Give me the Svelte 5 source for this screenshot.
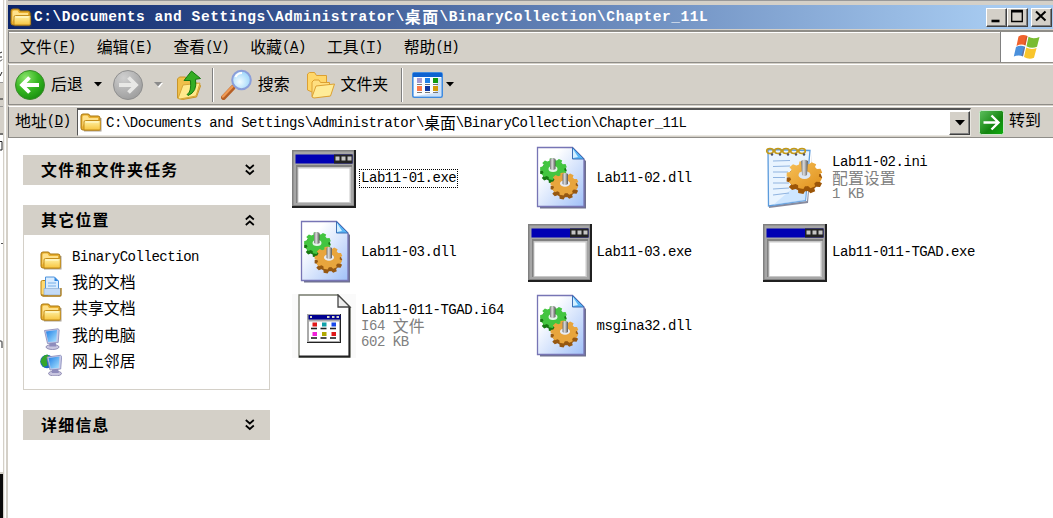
<script>
  const path = 'C:\\Documents and Settings\\Administrator\\桌面\\BinaryCollection\\Chapter_11L';

  const menus = [
    { name: '文件', key: 'F' },
    { name: '编辑', key: 'E' },
    { name: '查看', key: 'V' },
    { name: '收藏', key: 'A' },
    { name: '工具', key: 'T' },
    { name: '帮助', key: 'H' },
  ];

  const places = [
    { label: 'BinaryCollection', icon: 'folder' },
    { label: '我的文档', icon: 'docs' },
    { label: '共享文档', icon: 'folder' },
    { label: '我的电脑', icon: 'computer' },
    { label: '网上邻居', icon: 'network' },
  ];

  const files = [
    { name: 'Lab11-01.exe', icon: 'exe', selected: true },
    { name: 'Lab11-02.dll', icon: 'dll' },
    { name: 'Lab11-02.ini', icon: 'ini', details: ['配置设置', '1 KB'] },
    { name: 'Lab11-03.dll', icon: 'dll' },
    { name: 'Lab11-03.exe', icon: 'exe' },
    { name: 'Lab11-011-TGAD.exe', icon: 'exe' },
    { name: 'Lab11-011-TGAD.i64', icon: 'i64', details: ['I64 文件', '602 KB'] },
    { name: 'msgina32.dll', icon: 'dll' },
  ];

  // Splits a label into half-width and full-width runs.
  function runs(s) {
    return s.match(/[\u3000-\u9fff]+|[^\u3000-\u9fff]+/g).map((t) => ({
      t,
      wide: /[\u3000-\u9fff]/.test(t),
    }));
  }

  function gear(cx, cy, rx, ry, teeth = 9, depth = 0.19) {
    const pts = [];
    for (let i = 0; i < teeth; i++) {
      for (const [f, r] of [[0, 1 - depth], [0.2, 1 - depth], [0.34, 1], [0.76, 1], [0.9, 1 - depth]]) {
        const a = ((i + f) / teeth) * Math.PI * 2;
        pts.push(`${(cx + Math.cos(a) * rx * r).toFixed(1)},${(cy + Math.sin(a) * ry * r).toFixed(1)}`);
      }
    }
    return pts.join(' ');
  }
</script>

{#snippet txt(s)}{#each runs(s) as r}<span class={r.wide ? 'cj' : 'la'}>{r.t}</span>{/each}{/snippet}

{#snippet folder(w, h)}
  <svg width={w} height={h} viewBox="0 0 22 19">
    <path d="M3 5h18.500v13.500H4z" fill="#5b4a2a" opacity=".5" />
    <path d="M1 15V3q0-2 2-2h5q1.500 0 2 2h8q2 0 2 2v11q0 1-1 1H3q-2 0-2-2z" fill="#e9b030" stroke="#a8760f" />
    <path d="M2.500 14V4q0-1.500 1.500-1.500h3.500L9 5h9v3H5z" fill="#ffe18a" />
    <path d="M5.500 7.500h14q.8 0 .8 1V16q0 1-1 1H5q-1 0-1-1V9q0-1.500 1.500-1.500z" fill="url(#gold)" stroke="#c58f1c" />
    <path d="M5.500 9h13" stroke="#fffbd8" />
  </svg>
{/snippet}

{#snippet monitor()}
  <ellipse cx="12.500" cy="19" rx="6.500" ry="2.500" fill="#c9c6e0" stroke="#7f7ba6" stroke-width=".8" />
  <path d="M9.500 13h6l.8 5.500h-7z" fill="#8f8cbc" />
  <path d="M4.500 2.500L18 .8l1.200 1-1 12.700L7.500 15.500z" fill="#c8cbe8" stroke="#8688b8" stroke-width=".8" />
  <path d="M6 3.500l11-1.500-.8 11.500-8 .5z" fill="url(#screen)" />
{/snippet}

{#snippet chevron(up)}
  <svg class="chev" class:up width="10" height="12" viewBox="0 0 10 12">
    <path d="M.8 1l4 3.500L8.800 1M.8 6.500l4 3.500 4-3.500" fill="none" stroke="#000" stroke-width="1.700" />
  </svg>
{/snippet}

<svg class="defs" width="0" height="0">
  <defs>
    <linearGradient id="gold" x2="0" y2="1"><stop stop-color="#fff3a8" /><stop offset="1" stop-color="#f7c540" /></linearGradient>
    <linearGradient id="screen" x2="1" y2="1"><stop stop-color="#1f7fe6" /><stop offset="1" stop-color="#a9e2ff" /></linearGradient>
    <linearGradient id="page" x2="1" y2="1"><stop offset=".25" stop-color="#fff" /><stop offset="1" stop-color="#a0c0f8" /></linearGradient>
    <linearGradient id="pin" x2="1" y2="0"><stop stop-color="#777" /><stop offset=".4" stop-color="#ddd" /><stop offset="1" stop-color="#555" /></linearGradient>
    <linearGradient id="go" x2="1" y2="1"><stop stop-color="#5fc05f" /><stop offset=".6" stop-color="#13850f" /><stop offset="1" stop-color="#0fae0f" /></linearGradient>
    <linearGradient id="amber" x2="1" y2="1"><stop stop-color="#f7c25a" /><stop offset="1" stop-color="#e0901c" /></linearGradient>
    <radialGradient id="green" cx=".35" cy=".25" r=".85"><stop stop-color="#8be36c" /><stop offset=".5" stop-color="#37b722" /><stop offset="1" stop-color="#138a0c" /></radialGradient>
    <radialGradient id="grey" cx=".35" cy=".25" r=".85"><stop stop-color="#cfcfcf" /><stop offset="1" stop-color="#9a9a9a" /></radialGradient>
    <radialGradient id="lens" cx=".4" cy=".6" r=".7"><stop stop-color="#f2fcff" /><stop offset="1" stop-color="#8fd0fa" /></radialGradient>
  </defs>
</svg>

<div class="desk">
  <svg class="behind" width="3" height="518" viewBox="0 0 3 518">
    <path d="M0 0h3v518H0z" fill="#fff" />
    <path d="M0 82h3v53H0z" fill="#d4d0c8" />
    <path d="M0 82.500h3M0 106.500h3" stroke="#999" />
    <path d="M0 99h3M0 134h3" stroke="#555" stroke-width="1.500" />
    <path d="M0 53l2-1M0 57h2M0 61.500l2-2M0 76l2-4" stroke="#222" fill="none" />
    <path d="M0 141.500h2v8.500H0" stroke="#222" fill="none" />
    <path d="M0 341h1.500q.5 0 .5 2v5" stroke="#222" fill="none" />
    <path d="M1 243.500h2" stroke="#555" />
    <path d="M0 472h3v2H0z" fill="#d4d0c8" />
    <path d="M0 474h3v44H0z" fill="#0a0a0a" />
  </svg>
  <div class="frame"></div>

  <div class="window">
    <header class="title">
      {@render folder(22, 19)}
      <h1>{@render txt(path)}</h1>
      <div class="controls">
        <button aria-label="min"><svg width="14" height="14"><path d="M2.500 12h8" stroke="#000" stroke-width="2.600" /></svg></button>
        <button aria-label="max"><svg width="14" height="14"><path d="M1.700 1.500h10.600v11H1.700zM1 2.800h12" fill="none" stroke="#000" stroke-width="1.300" /></svg></button>
        <button class="close" aria-label="close"><svg width="14" height="14"><path d="M2 2.500l9.500 9M11.500 2.500l-9.500 9" stroke="#000" stroke-width="2" /></svg></button>
      </div>
    </header>

    <div class="menubar">
      <nav>
        {#each menus as m}
          <span class="menu"><span class="cj">{m.name}</span><span class="la">(<u>{m.key}</u>)</span></span>
        {/each}
      </nav>
      <div class="flag">
        <svg width="28" height="26" viewBox="0 0 28 26">
          <path d="M5.500 2.500Q9.500 0 14.500 2L12.500 11.500Q8 9.500 3.500 12z" fill="#f0622c" />
          <path d="M15.500 2.800Q20 5.500 26.500 3L24 12.800Q18.500 15 13.500 12.200z" fill="#79bc32" />
          <path d="M3 13Q7.500 10.800 12.200 12.800L10 22.500Q6 20.500.8 22.500z" fill="#4a90dc" />
          <path d="M13.200 13.500Q18 16 23.600 14L21 23.800Q16 26 11 23z" fill="#f9c52c" />
          <path d="M13 3l1.500-1-2 9.500-1.500-.5zM11 13l1 .3-2 9-1.500-.5z" fill="#9c3a28" opacity=".35" />
        </svg>
      </div>
    </div>

    <div class="toolbar">
      <svg class="back" width="32" height="32" viewBox="0 0 32 32">
        <circle cx="16" cy="16" r="14.500" fill="url(#green)" stroke="#3c8a2c" />
        <path d="M25 16H9M15.500 8.500L8 16l7.500 7.500" fill="none" stroke="#fff" stroke-width="3.800" />
      </svg>
      <span class="lbl back-l">{@render txt('后退')}</span>
      <svg class="tri t1" width="8" height="5"><path d="M0 0h8L4 4.500z" fill="#000" /></svg>
      <svg class="fwd" width="32" height="32" viewBox="0 0 32 32">
        <circle cx="16" cy="16" r="14.500" fill="url(#grey)" stroke="#8f8f8f" />
        <path d="M7 16h16M16.500 8.500L24 16l-7.500 7.500" fill="none" stroke="#e8e8e6" stroke-width="3.800" />
      </svg>
      <svg class="tri t2" width="9" height="6"><path d="M1 1h8L5 6z" fill="#fff" /><path d="M0 0h8L4 4.500z" fill="#8a8a8a" /></svg>
      <svg class="upf" width="26" height="30" viewBox="0 0 26 30">
        <path d="M1.500 28V9l2-2h6l2 3 12 4 1 2-4 11-14 2.500z" fill="#f0c04a" stroke="#c8952a" />
        <path d="M2 28.500L7 15l17-2-4 13-16 3z" fill="#ffe98c" stroke="#d6a638" />
        <path d="M11 24.500q4.500-2 3.500-14H8L15.500 1 24.500 8.500l-5 .8Q21.500 22 12 25.500z" fill="#35ad24" stroke="#15780f" />
      </svg>
      <i class="sep s1"></i>
      <svg class="search" width="32" height="31" viewBox="0 0 32 31">
        <path d="M2.500 28.500L12 18.500" stroke="#b65f25" stroke-width="5" stroke-linecap="round" />
        <path d="M2 27.500L11.500 17.500" stroke="#ef9a55" stroke-width="2.500" stroke-linecap="round" />
        <circle cx="20.500" cy="11" r="9.300" fill="url(#lens)" stroke="#8b9fda" stroke-width="2" />
        <path d="M14.500 8q2-4 6.500-4" fill="none" stroke="#fff" stroke-width="2" />
      </svg>
      <span class="lbl search-l">{@render txt('搜索')}</span>
      <svg class="folders" width="30" height="28" viewBox="0 0 30 28">
        <path d="M1.500 19V3l2-1.500h5l2 3h10V12L6 21z" fill="#ffd76a" stroke="#dca032" />
        <path d="M6 25.500V11l2-2h5l1.500 2.500h9V25z" fill="#ffdf80" stroke="#dca032" />
        <path d="M6 26l4-11 18.500-2-4 12L8 27z" fill="#ffec98" stroke="#dca032" />
      </svg>
      <span class="lbl folders-l">{@render txt('文件夹')}</span>
      <i class="sep s2"></i>
      <svg class="views" width="31" height="26" viewBox="0 0 31 26">
        <rect x=".8" y=".8" width="29.400" height="24.400" rx="1.500" fill="#f8fbff" stroke="#3f8be0" stroke-width="1.600" />
        <path d="M1 1h29v4H1z" fill="#0d62d0" />
        <path d="M26 6h3v18H3l20-3z" fill="#cde1fa" />
        {#each ['#a59ad2', '#1d80e8', '#109a10', '#ff7848', '#0c35a0', '#d49b08'] as c, i}
          <rect x={5 + (i % 3) * 8} y={6 + Math.floor(i / 3) * 8} width="5" height="5" fill={c} />
          <path d={`M${5 + (i % 3) * 8} ${12.500 + Math.floor(i / 3) * 8}h5`} stroke="#777" />
        {/each}
      </svg>
      <svg class="tri t3" width="8" height="5"><path d="M0 0h8L4 4.500z" fill="#000" /></svg>
    </div>

    <div class="address">
      <span class="addr-l"><span class="cj">地址</span><span class="la">(<u>D</u>)</span></span>
      <div class="field">
        {@render folder(22, 19)}
        <span class="value">{@render txt(path)}</span>
        <button aria-label="open"><svg width="10" height="6"><path d="M0 0h10L5 5.500z" fill="#000" /></svg></button>
      </div>
      <svg class="goicon" width="25" height="25" viewBox="0 0 25 25">
        <rect x=".5" y=".5" width="24" height="24" rx="2" fill="url(#go)" stroke="#cfe8cf" />
        <path d="M4.500 12.500h14M12.500 5.500l7 7-7 7" fill="none" stroke="#fff" stroke-width="2.400" />
      </svg>
      <span class="go-l">{@render txt('转到')}</span>
    </div>

    <main>
      <aside>
        <section>
          <h2>{@render txt('文件和文件夹任务')}{@render chevron(false)}</h2>
        </section>
        <section>
          <h2>{@render txt('其它位置')}{@render chevron(true)}</h2>
          <ul>
            {#each places as p}
              <li>
                {#if p.icon === 'folder'}
                  {@render folder(22, 19)}
                {:else if p.icon === 'docs'}
                  <svg width="22" height="21" viewBox="0 0 22 21">
                    <path d="M1 18V6q0-1.500 1.500-1.500H8V19H3q-2 0-2-1z" fill="#ffd970" stroke="#b98514" />
                    <path d="M5.500 1h9l4 4v11h-13z" fill="#d9ecff" stroke="#4f93dc" />
                    <path d="M14.500 1v4h4z" fill="#2f86e0" />
                    <path d="M8 7h8M8 10h8" stroke="#75aee8" />
                    <path d="M4 12.500h16.500V18q0 1-1 1H4z" fill="#c3daf5" stroke="#8faed0" stroke-width=".7" />
                    <path d="M1 18.500q1 1.500 2 1.500h17q1 0 1-1v-7" fill="none" stroke="#a8760f" stroke-width="1.300" />
                  </svg>
                {:else if p.icon === 'computer'}
                  <svg width="22" height="22" viewBox="0 0 22 22">{@render monitor()}</svg>
                {:else}
                  <svg width="22" height="22" viewBox="0 0 22 22">
                    <circle cx="7" cy="7.500" r="6.800" fill="#1f68c8" />
                    <path d="M.5 8q1-6.500 7-7.500l2 3-3 2 1 6-4 1.500z" fill="#35a52c" />
                    <g transform="translate(2.500 .5)">{@render monitor()}</g>
                  </svg>
                {/if}
                <span>{@render txt(p.label)}</span>
              </li>
            {/each}
          </ul>
        </section>
        <section>
          <h2>{@render txt('详细信息')}{@render chevron(false)}</h2>
        </section>
      </aside>

      <div class="files">
        {#each files as f}
          <div class="file">
            {#if f.icon === 'exe'}
              <svg class="exe" width="64" height="58" viewBox="0 0 64 58">
                <path d="M0 0h64v58H0z" fill="#202020" />
                <path d="M0 0h62v56H0z" fill="#808080" />
                <path d="M1.500 1.500h60V55h-60z" fill="#a6a6a6" />
                <path d="M3.500 4.500h57v9h-57z" fill="#0000b4" />
                <path d="M42 4.500h18.500v9H42z" fill="#222" />
                <path d="M43.500 6.500h4v4h-4zM49.500 6.500h4v4h-4zM55.500 6.500h4v4h-4z" fill="#c4c4c4" />
                <path d="M4 15h56v38H4z" fill="#808080" />
                <path d="M5.500 17h54v36h-54z" fill="#c8c8c8" />
                <path d="M6.500 18.500h51V52h-51z" fill="#fff" />
              </svg>
            {:else if f.icon === 'dll'}
              <svg class="tall" width="64" height="64" viewBox="0 0 64 64">
                <path d="M11 3.500h35L58 15v47.500H12z" fill="#3d4068" opacity=".75" />
                <path d="M9.500 1.500h35L56 13v47.500H9.500z" fill="url(#page)" stroke="#7775b5" stroke-width="1.300" />
                <path d="M44.500 1.500L56 13H44.500z" fill="#57b4f5" stroke="#3c6fb4" />
                <path d="M45 3l5 8-5 1z" fill="#d4f0ff" />
                <polygon points={gear(25.500, 26.500, 13.500, 11)} fill="#167812" />
                <polygon points={gear(25.500, 23, 13.500, 11)} fill="#43c540" />
                <ellipse cx="25" cy="23" rx="4.500" ry="3" fill="#e4f5e8" />
                <path d="M22 13q2.700-2 5.500 0v10q-2.800 2-5.500 0z" fill="url(#pin)" />
                <polygon points={gear(36.500, 42, 14, 11.500)} fill="#965812" />
                <polygon points={gear(36.500, 38, 14, 11.500)} fill="#e8a53d" />
                <ellipse cx="37" cy="37.500" rx="5" ry="3.300" fill="#e8ecf5" />
                <path d="M34.500 28q2.700-2 5.500 0v10q-2.800 2-5.500 0z" fill="url(#pin)" />
              </svg>
            {:else if f.icon === 'ini'}
              <svg class="tall" width="64" height="64" viewBox="0 0 64 64">
                <path d="M6 62l39-5 4-50-5 48-38 5z" fill="#555a75" opacity=".7" />
                <path d="M5 3.500l42 1-4.500 50L5.500 60z" fill="#e9f4ff" stroke="#5c9bdc" stroke-width="1.300" />
                <path d="M44 30l-1.500 24.500L10 59z" fill="#bcdcff" opacity=".6" />
                <path d="M10 15l17-.5M10 20.500l17-.5M10 26h15M10 31.500h12M10 37h16M10 43l16-1M10 49l16-2" stroke="#91b4e0" stroke-width="1.200" />
                {#each [4.500, 12.500, 20.500, 28.500, 36.500] as x}
                  <ellipse cx={x + 2.500} cy="5" rx="3.300" ry="2.500" fill="none" stroke="#c49918" stroke-width="1.600" />
                  <circle cx={x + 4.500} cy="8.500" r="1.200" fill="#4a5068" />
                {/each}
                <polygon points={gear(41.500, 34, 18, 14)} fill="#9c5608" />
                <polygon points={gear(41.500, 29, 18, 14)} fill="url(#amber)" />
                <ellipse cx="41.500" cy="29" rx="6" ry="4" fill="#dde8f5" />
                <path d="M38 15q3.500-2.500 7 0l-1 14q-2.500 2-5 0z" fill="url(#pin)" />
              </svg>
            {:else}
              <svg class="tall" width="64" height="64" viewBox="0 0 64 64">
                <path d="M0 0h64v64H0z" fill="#fafafa" />
                <path d="M7 1h39l12 12v50H7z" fill="#fff" stroke="#777b6e" stroke-width="1.300" />
                <path d="M57.300 13v49.500H7" fill="none" stroke="#222" stroke-width="1.800" />
                <path d="M46 1v12h12z" fill="#eee" stroke="#444" stroke-width="1.300" />
                <path d="M15 20h34v29H15z" fill="#222" />
                <path d="M15 20h33v28H15z" fill="#aaa" />
                <path d="M16.500 21h32v4.500h-32z" fill="#000090" />
                <path d="M35 22h2.500v2H35zM40 22h2.500v2H40zM44.500 22H47v2h-2.500zM18 22h2v2h-2z" fill="#d8d8c8" />
                <path d="M17 27.500h30V47H17z" fill="#fff" />
                {#each ['#e01818', '#10a0a8', '#1848e8', '#f020d8', '#b0a800', '#e01818'] as c, i}
                  <rect x={20.500 + (i % 3) * 9.500} y={28.500 + Math.floor(i / 3) * 9.500} width="4.500" height="4" fill={c} />
                  <path d={`M${19 + (i % 3) * 9.500} ${34.500 + Math.floor(i / 3) * 9.500}h6`} stroke="#222" stroke-width="1.600" />
                {/each}
              </svg>
            {/if}
            <div class="info">
              <span class="name" class:selected={f.selected}>{@render txt(f.name)}</span>
              {#each f.details ?? [] as d}<span class="detail">{@render txt(d)}</span>{/each}
            </div>
          </div>
        {/each}
      </div>
    </main>
  </div>
</div>

<style>
  :global(body) { background: #fff; overflow: hidden; }
  * { box-sizing: border-box; }
  .defs { position: absolute; }
  svg { flex: none; display: block; }
  button { padding: 0; }
  .desk {
    display: grid; grid-template-columns: 3px 5px 1fr; width: 1053px; height: 518px; overflow: hidden;
    font-family: "Liberation Mono", "Noto Sans CJK SC", monospace; font-size: 14px; color: #000; line-height: 16px;
  }
  .cj { font-family: "Noto Sans CJK SC", sans-serif; font-size: 15.9px; line-height: 16px; white-space: pre; }
  .la { letter-spacing: -0.46px; white-space: pre; }
  .frame { background: linear-gradient(90deg, #d4d0c8 0 1px, #f4f3ef 1px 2px, #fff 2px 3px, #d4d0c8 3px); }
  .window { display: grid; grid-template-rows: 24px 34px 42px 33px 1fr; background: #d4d0c8; border-top: 1px solid #999; padding-top: 4px; min-width: 0; }

  .title { display: flex; align-items: center; background: linear-gradient(90deg, #0a246a, #a6caf0 94%); padding: 0 0 0 2px; }
  h1 { margin: 0 0 0 2px; font-size: 14.500px; line-height: 18px; font-weight: 700; color: #fff; flex: 1; display: flex; align-items: center; }
  h1 .la { letter-spacing: 0.57px; }
  h1 .cj { font-size: 16px; letter-spacing: 1.300px; position: relative; top: -1px; }
  .controls { display: flex; padding-right: 1px; }
  .controls button {
    width: 21px; height: 19px; border: 1px solid; border-color: #fff #404040 #404040 #fff; background: #d4d0c8;
    box-shadow: inset -1px -1px #808080; display: grid; place-items: center; padding: 0 2px 2px 0;
  }
  .controls .close { margin-left: 3px; }

  .menubar { display: flex; border-bottom: 1px solid #8f8d88; border-top: 2px solid #8f8d88; margin-top: 1px; box-shadow: inset 0 1px #fff; }
  nav { flex: 1; display: flex; align-items: center; gap: 21.100px; padding-left: 11px; border-right: 1px solid #808080; border-left: 1px solid #808080; }
  .menu, .addr-l { display: flex; align-items: center; }
  .flag { width: 52px; display: grid; place-items: center; background: #fff; }

  .toolbar { display: flex; align-items: center; border-top: 1px solid #fff; border-bottom: 1px solid #8f8d88; border-left: 1px solid #808080; margin-top: 1px; padding-left: 5px; }
  .back-l { margin-left: 5px; }
  .t1 { margin-left: 11px; }
  .fwd { margin-left: 10px; }
  .t2 { margin-left: 10px; }
  .upf { margin-left: 13px; }
  .sep { width: 2px; height: 34px; background: linear-gradient(90deg, #808080 50%, #fff 50%); }
  .s1 { margin-left: 10px; }
  .search { margin-left: 7px; }
  .search-l { margin-left: 5px; }
  .folders { margin-left: 16px; }
  .folders-l { margin-left: 5px; }
  .s2 { margin-left: 13px; }
  .views { margin-left: 9px; }
  .t3 { margin-left: 3px; }

  .address { display: flex; align-items: center; border-top: 1px solid #fff; border-bottom: 1px solid #8f8d88; border-left: 1px solid #808080; margin-top: 1px; padding-left: 6px; }
  .addr-l { width: 62px; }
  .addr-l span, .go-l { position: relative; top: -1px; }
  .field { display: flex; align-items: center; width: 894px; height: 28px; background: #fff; border: 1px solid; border-color: #555 #e8e6e0 #e8e6e0 #555; border-top-width: 2px; padding-left: 2px; }
  .value { flex: 1; margin-left: 4px; display: flex; align-items: center; }
  .value .la { letter-spacing: -0.45px; }
  .field button { width: 21px; height: 24px; background: #d4d0c8; border: 1px solid; border-color: #fff #404040 #404040 #fff; box-shadow: inset -1px -1px #808080; display: grid; place-items: center; }
  .goicon { margin-left: 8px; }
  .go-l { margin-left: 5px; }

  main { display: grid; grid-template-columns: 284px 1fr; background: #fff; border-top: 1px solid #fff; }
  aside { padding: 16px 0 0 15px; display: flex; flex-direction: column; gap: 20px; width: 262px; }
  h2 { margin: 0; height: 30px; padding: 0 15px 0 18px; display: flex; align-items: center; background: #d4d0c8; font-size: 14px; }
  h2 .cj { font-weight: 700; letter-spacing: 1.300px; }
  .chev { margin-left: auto; }
  .up { transform: scaleY(-1); }
  ul { list-style: none; margin: 0; height: 155px; padding: 12px 0 0 16px; border: 1px solid #d4d0c8; border-top: 0; }
  li { display: flex; align-items: center; gap: 10px; height: 26.200px; }
  li > span { position: relative; top: -3px; }

  .files { display: grid; grid-template-columns: repeat(3, 235.500px); grid-auto-rows: 74px; padding-top: 3px; align-content: start; }
  .file { display: flex; align-items: center; }
  .tall { position: relative; top: -1px; }
  .info { display: flex; flex-direction: column; margin-left: 4px; position: relative; top: -1px; }
  .info > span { display: flex; align-items: center; height: 16px; padding-left: 1px; }
  .name { width: max-content; }
  .info > .selected { outline: 1px dotted #000; height: 17px; padding-right: 1px; }
  .detail { color: #808080; }
</style>
